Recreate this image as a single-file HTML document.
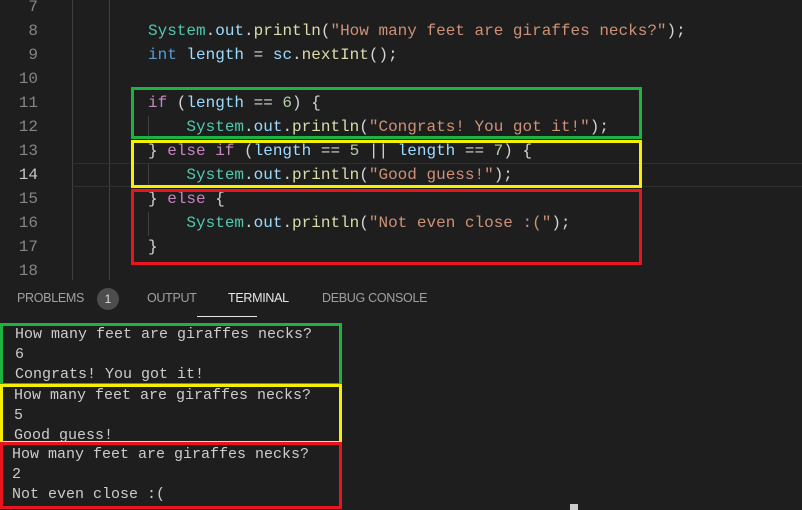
<!DOCTYPE html>
<html><head><meta charset="utf-8"><style>
body{margin:0;width:802px;height:510px;background:#1e1e1e;overflow:hidden;position:relative;font-family:"Liberation Mono",monospace}
.ln{position:absolute;left:0;width:38px;text-align:right;color:#858585;font-size:16px;line-height:24px}
.code{position:absolute;left:148px;font-size:16px;line-height:24px;white-space:pre;color:#d4d4d4}
.t{color:#4ec9b0}.o{color:#9cdcfe}.f{color:#dcdcaa}.s{color:#ce9178}.k{color:#569cd6}.c{color:#c586c0}.n{color:#b5cea8}.v{color:#9cdcfe}
.box{position:absolute;border:3px solid;box-sizing:border-box}
.tab{position:absolute;top:291px;font-family:"Liberation Sans",sans-serif;font-size:12.5px;color:#a0a0a0;letter-spacing:-0.3px}
.term{position:absolute;font-size:15px;line-height:20px;color:#cccccc;white-space:pre}
</style></head><body>
<div style="position:absolute;left:72px;top:0;width:1px;height:280px;background:#404040"></div>
<div style="position:absolute;left:109px;top:0;width:1px;height:280px;background:#404040"></div>
<div style="position:absolute;left:72px;top:163px;width:730px;height:22px;border-top:1px solid #303030;border-bottom:1px solid #303030"></div>
<div style="position:absolute;left:148px;top:116px;width:1px;height:24px;background:#404040"></div>
<div style="position:absolute;left:148px;top:164px;width:1px;height:24px;background:#404040"></div>
<div style="position:absolute;left:148px;top:212px;width:1px;height:24px;background:#404040"></div>
<div class="ln" style="top:-5px">7<br>8<br>9<br>10<br>11<br>12<br>13<br><span style="color:#c6c6c6">14</span><br>15<br>16<br>17<br>18</div>
<div class="code" style="top:19px"><span class="t">System</span>.<span class="o">out</span>.<span class="f">println</span>(<span class="s">"How many feet are giraffes necks?"</span>);
<span class="k">int</span> <span class="v">length</span> = <span class="v">sc</span>.<span class="f">nextInt</span>();

<span class="c">if</span> (<span class="v">length</span> == <span class="n">6</span>) {
    <span class="t">System</span>.<span class="o">out</span>.<span class="f">println</span>(<span class="s">"Congrats! You got it!"</span>);
} <span class="c">else if</span> (<span class="v">length</span> == <span class="n">5</span> || <span class="v">length</span> == <span class="n">7</span>) {
    <span class="t">System</span>.<span class="o">out</span>.<span class="f">println</span>(<span class="s">"Good guess!"</span>);
} <span class="c">else</span> {
    <span class="t">System</span>.<span class="o">out</span>.<span class="f">println</span>(<span class="s">"Not even close :("</span>);
}</div>
<div class="box" style="left:131px;top:87px;width:511px;height:52px;border-color:#1db341"></div>
<div class="box" style="left:131px;top:140px;width:511px;height:48px;border-color:#f5f000"></div>
<div class="box" style="left:131px;top:189px;width:511px;height:76px;border-color:#e8141e"></div>

<div class="tab" style="left:17px">PROBLEMS</div>
<div style="position:absolute;left:97px;top:288px;width:22px;height:22px;border-radius:11px;background:#4d4d4d;color:#ddd;font-family:'Liberation Sans',sans-serif;font-size:12px;text-align:center;line-height:22px">1</div>
<div class="tab" style="left:147px">OUTPUT</div>
<div class="tab" style="left:228px;color:#e7e7e7">TERMINAL</div>
<div style="position:absolute;left:197px;top:316px;width:60px;height:1px;background:#e7e7e7"></div>
<div class="tab" style="left:322px">DEBUG CONSOLE</div>

<div class="term" style="left:15px;top:325px">How many feet are giraffes necks?
6
Congrats! You got it!</div>
<div class="term" style="left:14px;top:386px">How many feet are giraffes necks?
5
Good guess!</div>
<div class="term" style="left:12px;top:445px">How many feet are giraffes necks?
2
Not even close :(</div>
<div class="box" style="left:0;top:323px;width:342px;height:63px;border-color:#1db341"></div>
<div class="box" style="left:0;top:384px;width:342px;height:60px;border-color:#f5f000"></div>
<div class="box" style="left:0;top:442px;width:342px;height:67px;border-color:#e8141e"></div>
<div style="position:absolute;left:570px;top:504px;width:8px;height:6px;background:#cccccc"></div>
</body></html>
